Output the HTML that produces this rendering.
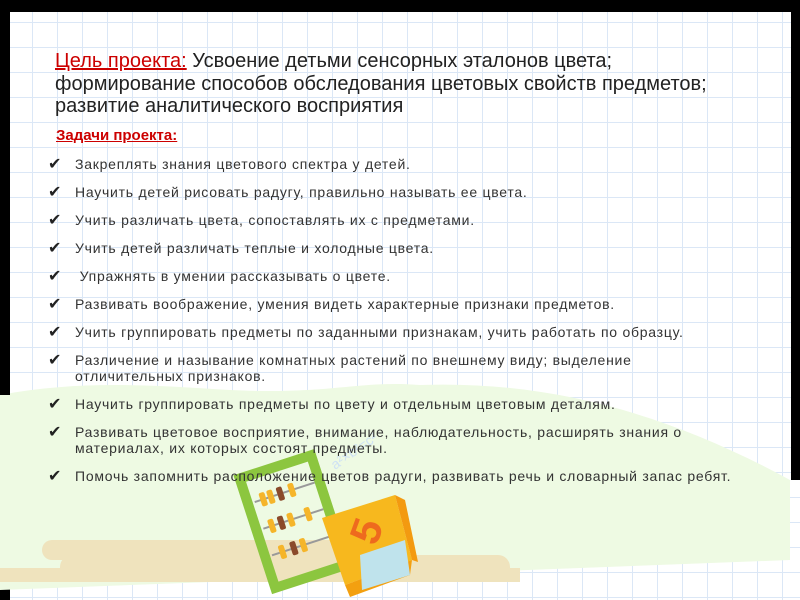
<!DOCTYPE html>
<html><head><meta charset="utf-8"><style>
*{margin:0;padding:0}
body{width:800px;height:600px;position:relative;overflow:hidden;background:#000;font-family:"Liberation Sans",sans-serif;}
#page{position:absolute;left:10px;top:12px;width:790px;height:588px;background-color:#fff;
background-image:linear-gradient(#dbe7f6 1px,transparent 1px),linear-gradient(90deg,#dbe7f6 1px,transparent 1px);
background-size:25px 25px;background-position:-3px 10px;}
#lblack{position:absolute;left:0;top:0;width:10px;height:395px;background:#000}
#rblack{position:absolute;left:791px;top:0;width:9px;height:480px;background:#000}
.t{position:absolute;left:55px;top:50px;font-size:20px;line-height:22.5px;color:#222;letter-spacing:0}
.t .r{color:#c00;text-decoration:underline}
.h{position:absolute;left:56px;top:127px;font-size:15px;font-weight:bold;color:#c00;text-decoration:underline}
ul{list-style:none;position:absolute;left:48px;top:156px;font-size:14px;color:#333;width:740px;letter-spacing:0.75px}
li{position:relative;padding-left:27px;line-height:16px;margin-bottom:12px}
li:before{content:"✔";position:absolute;left:0;top:0;color:#222;font-size:16px;font-family:"DejaVu Sans",sans-serif}
</style></head><body>
<div id="page"></div>
<svg style="position:absolute;left:0;top:0" width="800" height="600">
<path d="M0 395 C80 380 150 385 230 390 C330 395 360 380 420 385 C560 380 680 420 790 480 L790 560 L0 590 Z" fill="#eefae3"/>
<rect x="42" y="540" width="310" height="20" rx="10" fill="#efe3bd"/>
<rect x="60" y="555" width="450" height="27" rx="12" fill="#efe3bd"/>
<rect x="0" y="568" width="520" height="14" fill="#efe3bd"/>
<g transform="rotate(-18 290 520)">
<rect x="255" y="465" width="75" height="115" fill="none" stroke="#8cc63f" stroke-width="10"/>
<line x1="262" y1="492" x2="325" y2="492" stroke="#999" stroke-width="2"/>
<line x1="262" y1="520" x2="325" y2="520" stroke="#999" stroke-width="2"/>
<line x1="262" y1="548" x2="325" y2="548" stroke="#999" stroke-width="2"/>
<g fill="#f5b52a"><rect x="268" y="485" width="6" height="14" rx="2"/><rect x="276" y="485" width="6" height="14" rx="2"/><rect x="298" y="485" width="6" height="14" rx="2"/>
<rect x="268" y="513" width="6" height="14" rx="2"/><rect x="288" y="513" width="6" height="14" rx="2"/><rect x="306" y="513" width="6" height="14" rx="2"/>
<rect x="270" y="541" width="6" height="14" rx="2"/><rect x="292" y="541" width="6" height="14" rx="2"/></g>
<g fill="#8b4a2a"><rect x="286" y="485" width="6" height="14" rx="2"/><rect x="278" y="513" width="6" height="14" rx="2"/><rect x="282" y="541" width="6" height="14" rx="2"/></g>
</g>
<path d="M322 518 L395 495 L412 560 L345 585 Z" fill="#f7b81e"/>
<path d="M345 585 L412 560 L410 575 L350 597 Z" fill="#f3a010"/>
<path d="M395 495 L405 500 L418 562 L412 560 Z" fill="#f39a10"/>
<path d="M360 555 L405 540 L410 575 L362 590 Z" fill="#bfe3ec"/>
<text x="350" y="540" font-size="42" font-weight="bold" fill="#ee6a1e" font-family="Liberation Sans,sans-serif" transform="rotate(-70 368 525)">5</text>
<text x="335" y="470" font-size="14" fill="#cfe2f4" transform="rotate(-35 335 470)" font-family="Liberation Sans,sans-serif">a²×b²=c²</text>
</svg>
<div id="lblack"></div><div id="rblack"></div>
<div class="t"><span class="r">Цель проекта:</span> Усвоение детьми сенсорных эталонов цвета;<br>формирование способов обследования цветовых свойств предметов;<br>развитие аналитического восприятия</div>
<div class="h">Задачи проекта:</div>
<ul>
<li>Закреплять знания цветового спектра у детей.</li>
<li>Научить детей рисовать радугу, правильно называть ее цвета.</li>
<li>Учить различать цвета, сопоставлять их с предметами.</li>
<li>Учить детей различать теплые и холодные цвета.</li>
<li>&nbsp;Упражнять в умении рассказывать о цвете.</li>
<li>Развивать воображение, умения видеть характерные признаки предметов.</li>
<li>Учить группировать предметы по заданными признакам, учить работать по образцу.</li>
<li>Различение и называние комнатных растений по внешнему виду; выделение<br>отличительных признаков.</li>
<li>Научить группировать предметы по цвету и отдельным цветовым деталям.</li>
<li>Развивать цветовое восприятие, внимание, наблюдательность, расширять знания о<br>материалах, их которых состоят предметы.</li>
<li>Помочь запомнить расположение цветов радуги, развивать речь и словарный запас ребят.</li>
</ul>
</body></html>
